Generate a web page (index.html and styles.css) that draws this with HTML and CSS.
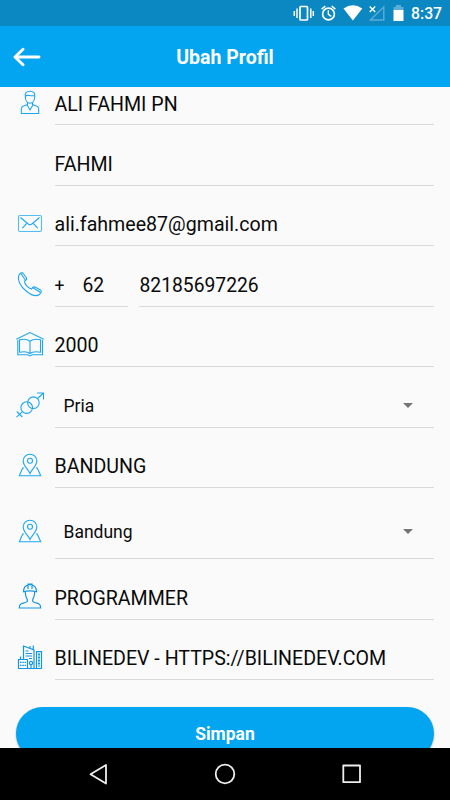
FILE: index.html
```
<!DOCTYPE html>
<html lang="id">
<head>
    <meta charset="UTF-8">
    <meta name="viewport" content="width=device-width, initial-scale=1.0">
    <title>Ubah Profil</title>
    <link rel="stylesheet" href="styles.css">
</head>
<body>
<div class="screen">
    <div class="status-bar">
        <svg class="status-icons" width="112" height="26" viewBox="0 0 112 26">
            <rect x="7" y="6.5" width="7.5" height="13.5" rx="0.8" fill="none" stroke="#fff" stroke-width="1.7"/>
            <path d="M4 8.5v9.5M1.3 11v5M17.8 8.5v9.5M20.3 11v5" stroke="#fff" stroke-width="1.5"/>
            <circle cx="35.5" cy="14" r="5.9" fill="none" stroke="#fff" stroke-width="1.7"/>
            <path d="M35.3 10.3v4l3 2M28.6 9.1l3.7-3M42.4 9.1l-3.7-3" fill="none" stroke="#fff" stroke-width="1.4"/>
            <path d="M50.5 8.5q9.3-6.4 18.8 0L59.9 20.5z" fill="#fff"/>
            <path d="M90.8 6.8v13.2H77.3z" fill="none" stroke="#5caed6" stroke-width="1.4"/>
            <path d="M76.7 6.5l5.5 5.5M82.2 6.5l-5.5 5.5" stroke="#fff" stroke-width="1.4"/>
            <path d="M100.5 10V7h2.5V5h5v2h2.5v3z" fill="#5caed6"/>
            <path d="M100.5 10h10v11h-10z" fill="#fff"/>
        </svg>
        <span class="clock">8:37</span>
    </div>
    <div class="header">
        <svg class="back" width="28" height="20" viewBox="0 0 28 20">
            <path d="M10 2.3L2 10l8 7.7M2.5 10H26" fill="none" stroke="#fff" stroke-width="2.9" stroke-linecap="round" stroke-linejoin="round"/>
        </svg>
        <h1>Ubah Profil</h1>
    </div>

    <div class="content">
        <div class="row first">
            <svg class="icon" viewBox="0 0 30 30">
                <path d="M10.3 8.5c-.6-3.500 1-5.300 4.700-5.300s5.300 1.800 4.700 5.300c0 4-2 6.800-4.700 6.800s-4.700-2.800-4.700-6.800zM10.500 8c2.500-1.700 4.500.5 9.300-.5"/>
                <path d="M12.5 14.500v2l-4 1.500c-1.600.5-2.200 1.600-2.200 3v4.500h17.400V21c0-1.400-.6-2.500-2.200-3l-4-1.500v-2M12 16.800l3 5.200 3-5.200"/>
            </svg>
            <div class="field">ALI FAHMI PN</div>
        </div>
        <div class="row">
            <div class="icon"></div>
            <div class="field">FAHMI</div>
        </div>
        <div class="row">
            <svg class="icon" viewBox="0 0 30 30">
                <rect x="3.5" y="6.5" width="23" height="16" rx="1.5" opacity=".75"/>
                <path d="M5.5 8.5l8 6.7q1.5 1 3 0l8-6.7M12 14.2l-4.7 5M18 14.2l4.7 5"/>
            </svg>
            <div class="field">ali.fahmee87@gmail.com</div>
        </div>
        <div class="row">
            <svg class="icon" viewBox="0 0 30 30">
                <path d="M4 5c1.200-1.800 2.800-2.900 3.800-2l3.700 5c.6 1.200-.2 2.300-2.100 3 0 3.600 4.300 7.300 7.200 8 1-1.800 2.300-2.500 3.500-2l5.300 2.900c1.700 1 .6 2.700-.7 4.300-3 2.400-7.700 1.500-13-2.700C5.600 17 2.100 10 4 5zM6 3.700l4.500 6.500M18 17.800l7.200 4.500"/>
            </svg>
            <div class="phone">
                <div class="field code"><span class="plus">+</span>62</div>
                <div class="field number">82185697226</div>
            </div>
        </div>
        <div class="row">
            <svg class="icon" viewBox="0 0 30 30">
                <path d="M1.3 9.3L15 2.600l13.700 6.700M2.800 10v14.700h10l2.200 1.200 2.200-1.200h10.300V10"/>
                <path d="M15 11.200v12.500M15 11.200c-2.500-2-6.500-2.200-10-1.500H4.500v12.500c4-.8 8-.8 10.500 1.300 2.500-2.100 6.500-2.100 10.500-1.300V9.700c-4-.7-8-.5-10.500 1.500z"/>
            </svg>
            <div class="field">2000</div>
        </div>
        <div class="row">
            <svg class="icon" viewBox="0 0 30 30">
                <circle cx="11.7" cy="16.6" r="5.8"/>
                <circle cx="18.4" cy="11.7" r="5.8"/>
                <path d="M22.5 7.5l6-5.500M22 2h6.500v6.500M7.500 20.700l-6 5.500M1.800 20.500l5.500 5.500"/>
            </svg>
            <div class="field select">Pria<span class="arrow"></span></div>
        </div>
        <div class="row">
            <svg class="icon" viewBox="0 0 30 30">
                <path d="M15 22.500c-1.500-4-6.800-7.500-6.800-12.500a6.800 6.800 0 0 1 13.600 0c0 5-5.300 8.500-6.800 12.500z"/>
                <circle cx="15" cy="9.7" r="2.5"/>
                <path d="M9 17H7.700L4.300 24.800h21.400L22.300 17H21"/>
            </svg>
            <div class="field">BANDUNG</div>
        </div>
        <div class="row tall">
            <svg class="icon" viewBox="0 0 30 30">
                <path d="M15 22.500c-1.500-4-6.800-7.500-6.800-12.500a6.800 6.800 0 0 1 13.600 0c0 5-5.300 8.500-6.800 12.500z"/>
                <circle cx="15" cy="9.7" r="2.5"/>
                <path d="M9 17H7.700L4.300 24.800h21.400L22.300 17H21"/>
            </svg>
            <div class="field select">Bandung<span class="arrow"></span></div>
        </div>
        <div class="row">
            <svg class="icon dark" viewBox="0 0 30 30">
                <path d="M8.5 8.800c0-4 2-6.800 6.500-7.300 4.500.5 6.500 3.300 6.500 7.300-4-1.200-9-1.200-13 0zM13 6V1.200h4V6"/>
                <path d="M10.3 8.800c.2 4.500 1.200 6.500 2 7.500v2c-1.500 1.500-4 1.700-6 2.500-1.500.8-2 2.200-2 4.200h21.400c0-2-.5-3.400-2-4.200-2-.8-4.500-1-6-2.500v-2c.8-1 1.800-3 2-7.500"/>
            </svg>
            <div class="field">PROGRAMMER</div>
        </div>
        <div class="row">
            <svg class="icon dark" viewBox="0 0 30 30">
                <path d="M3.5 16.500h9v9h-9zM5.500 16.500v-3M8.500 16V3l10.500 4v18.500h-6.500M15 4.800V3M18.300 6.500V2.500M21.500 8.700h5v16.800h-5z"/>
                <path d="M10.5 8h3M10.500 10.500h6.500M10.500 13h6.500M14 15.500h3"/>
                <path d="M24 10.500v13" stroke-width="2" stroke-dasharray="2 1"/>
                <path d="M5 19.300h6M5 22.300h6" stroke-dasharray="1.5 .8"/>
                <circle cx="16" cy="20" r="1.6"/>
                <path d="M16 21.500v4M12.500 25.500h14"/>
            </svg>
            <div class="field">BILINEDEV - HTTPS://BILINEDEV.COM</div>
        </div>
        <div class="button">Simpan</div>
    </div>

    <div class="nav-bar">
        <svg width="450" height="52" viewBox="0 0 450 52">
            <g fill="none" stroke="#eee" stroke-width="1.8" stroke-linejoin="round">
                <path d="M106 17v18.500L90.500 26.200z"/>
                <circle cx="225" cy="26" r="9.3"/>
                <rect x="343.3" y="17.5" width="16.7" height="16.7"/>
            </g>
        </svg>
    </div>
</div>
</body>
</html>
```
FILE: styles.css
```
body {
    margin: 0;
    font-family: Roboto, sans-serif;
    background-color: #fafafa;
    color: #0a0a0a;
}
.screen {
    display: flex;
    flex-direction: column;
    height: 800px;
    width: 450px;
    overflow: hidden;
}
.status-bar {
    display: flex;
    justify-content: flex-end;
    align-items: center;
    box-sizing: border-box;
    height: 26px;
    padding-right: 9px;
    background-color: #0b87c1;
    color: #fff;
}
.status-icons {
    margin-right: 6.5px;
}
.clock {
    width: 30px;
    font-size: 15.8px;
    font-weight: 500;
    line-height: 26px;
    padding-top: 2px;
    white-space: nowrap;
}
.header {
    display: grid;
    grid-template-columns: 42px 1fr 42px;
    align-items: center;
    height: 61px;
    flex-shrink: 0;
    background-color: #03a4f0;
    color: #fff;
}
.back {
    margin-left: 13px;
}
h1 {
    margin: 2px 0 0;
    font-size: 19.5px;
    font-weight: bold;
    text-align: center;
}
.content {
    flex: 1;
    min-height: 0;
    overflow: hidden;
    padding: 0 16px 0 15px;
}
.row {
    display: flex;
    align-items: flex-end;
    height: 60.5px;
}
.row.first {
    height: 38px;
}
.row.tall {
    height: 71px;
}
.icon {
    width: 30px;
    height: 30px;
    flex-shrink: 0;
    margin-right: 9.5px;
    margin-bottom: 7px;
    fill: none;
    stroke: #1ea7ee;
    stroke-width: 1.1;
}
.icon.dark {
    stroke: #1296e6;
    stroke-width: 1.2;
}
.tall .icon {
    margin-bottom: 12px;
}
.field {
    flex: 1;
    box-sizing: border-box;
    height: 42px;
    line-height: 42px;
    border-bottom: 1px solid #d9d9d9;
    font-size: 19.6px;
    white-space: nowrap;
}
.row.first .field {
    height: 38px;
    line-height: 35px;
}
.phone {
    display: flex;
    flex: 1;
    gap: 11px;
}
.phone .field {
    font-size: 19.3px;
}
.code {
    flex: 0 0 73px;
}
.number {
    padding-left: 1px;
}
.phone .plus {
    display: inline-block;
    width: 28px;
    font-size: 17.5px;
}
.select {
    display: flex;
    justify-content: space-between;
    align-items: center;
    padding: 0 21px 0 9px;
    font-size: 17.5px;
}
.tall .field {
    height: 53px;
}
.arrow {
    margin-bottom: 1px;
    border: 5px solid transparent;
    border-top-color: #757575;
    border-bottom: 0;
}
.button {
    height: 53px;
    margin: 27px 0 0 1px;
    line-height: 54px;
    border-radius: 27px;
    background-color: #03a4f0;
    box-shadow: 0 1px 2px rgba(0, 0, 0, 0.3);
    color: #fff;
    font-size: 17.5px;
    font-weight: bold;
    text-align: center;
}
.nav-bar {
    height: 52px;
    flex-shrink: 0;
    background-color: #000;
}
.nav-bar svg {
    display: block;
}
```
